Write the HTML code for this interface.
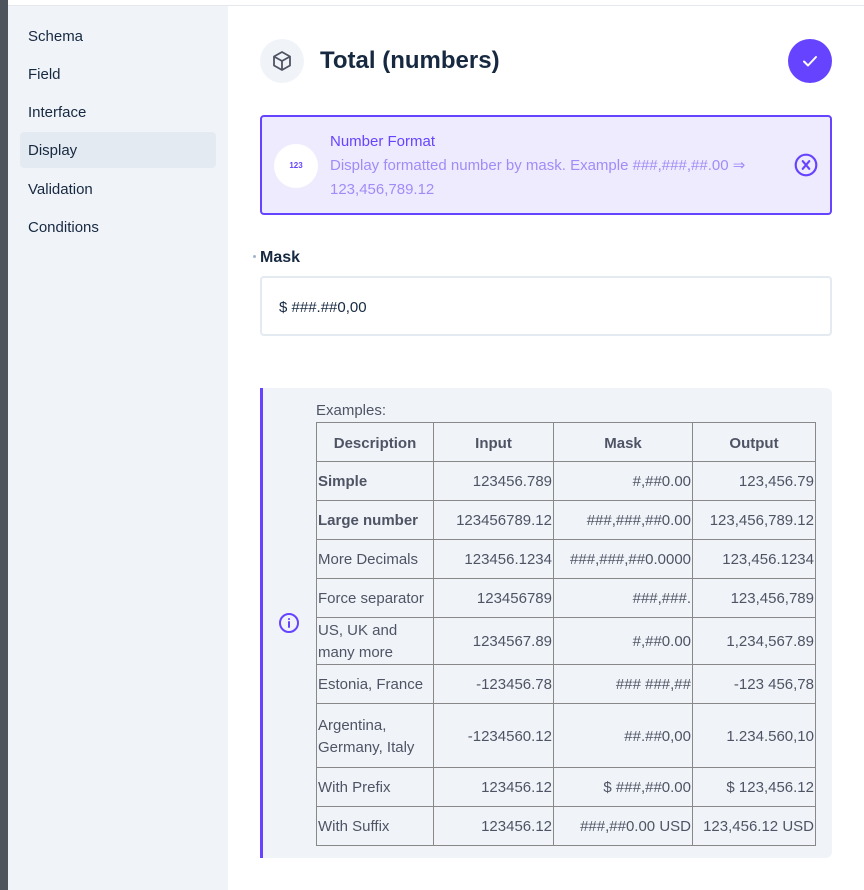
<!DOCTYPE html>
<html><head><meta charset="utf-8"><style>
*{box-sizing:border-box;margin:0;padding:0}
body{width:864px;height:890px;overflow:hidden;font-family:"Liberation Sans",sans-serif;background:#fff;position:relative;color:#172940}
#strip{position:absolute;left:0;top:0;width:8px;height:890px;background:#4f555c}
#side{position:absolute;left:8px;top:6px;width:220px;height:884px;background:#f0f4f9}
#top{position:absolute;left:8px;top:0;width:856px;height:6px;background:#fff;border-bottom:1px solid #e4e7eb}
.nav{position:absolute;left:12px;width:196px;height:36px;line-height:36px;padding-left:8px;font-size:15px;color:#172940;border-radius:4px}
.nav.a{background:#e4eaf1}
#hicon{position:absolute;left:260px;top:39px;width:44px;height:44px;border-radius:50%;background:#f0f4f9}
#title{position:absolute;left:320px;top:47px;font-size:24px;font-weight:bold;color:#172940}
#check{position:absolute;left:788px;top:39px;width:44px;height:44px;border-radius:50%;background:#6644ff}
#card{position:absolute;left:260px;top:115px;width:572px;height:100px;border:2px solid #6644ff;border-radius:4px;background:#efebfe}
#c123{position:absolute;left:12px;top:27px;width:44px;height:44px;border-radius:50%;background:#fff;color:#6644ff;font-size:8px;font-weight:bold;text-align:center;line-height:44px}
#ct{position:absolute;left:68px;top:16px;font-size:15px;color:#6644ff}
#cd{position:absolute;left:68px;top:37px;width:460px;font-size:15px;line-height:24px;color:#a18cf7}
#mask{position:absolute;left:260px;top:249px;font-size:16px;font-weight:bold}
#dot{position:absolute;left:253px;top:255px;width:3px;height:3px;border-radius:50%;background:#a2b5cd}
#inp{position:absolute;left:260px;top:276px;width:572px;height:60px;border:2px solid #e4eaf1;border-radius:4px;padding:0 17px;line-height:59px;font-size:15px;color:#172940}
#info{position:absolute;left:260px;top:388px;width:572px;height:470px;background:#f0f4f9;border-left:3px solid #6644ff;border-radius:0 6px 6px 0}
#ex{position:absolute;left:316px;top:402px;font-size:15px;color:#4f5464}
table{position:absolute;left:316px;top:422px;border-collapse:collapse;font-size:15px;color:#4f5464}
td,th{border:1px solid #888;padding:2px 1px 0 1px}
th{height:39px;text-align:center}
td{text-align:right;line-height:22px}
td:first-child{text-align:left}
</style></head><body>
<div id="strip"></div><div id="top"></div>
<div id="side">
<div class="nav" style="top:13px">Schema</div>
<div class="nav" style="top:51px">Field</div>
<div class="nav" style="top:89px">Interface</div>
<div class="nav a" style="top:126px;line-height:38px">Display</div>
<div class="nav" style="top:166px">Validation</div>
<div class="nav" style="top:204px">Conditions</div>
</div>
<div id="hicon"><svg width="44" height="44" viewBox="0 0 44 44" fill="none" stroke="#4f5464" stroke-width="1.8" stroke-linejoin="round"><path d="M22 13l8 4.5v9L22 31l-8-4.5v-9z M14 17.5l8 4.5 8-4.5 M22 22v9"/></svg></div>
<div id="title">Total (numbers)</div>
<div id="check"><svg width="44" height="44" viewBox="0 0 44 44" fill="none" stroke="#fff" stroke-width="2" stroke-linecap="round" stroke-linejoin="round"><path d="M16 22.5l4 4 8-8.5"/></svg></div>
<div id="card"><div id="c123">123</div><div id="ct">Number Format</div>
<div id="cd">Display formatted number by mask. Example ###,###,##.00 ⇒ 123,456,789.12</div>
<svg style="position:absolute;left:531px;top:35px" width="26" height="26" viewBox="0 0 24 24" fill="none" stroke="#6644ff" stroke-width="2" stroke-linecap="round"><circle cx="12" cy="12" r="9.5"/><path d="M9 8.5l6 7M15 8.5l-6 7"/></svg></div>
<div id="dot"></div><div id="mask">Mask</div>
<div id="inp">$ ###.##0,00</div>
<div id="info"><svg style="position:absolute;left:14px;top:223px" width="24" height="24" viewBox="0 0 24 24" fill="none" stroke="#6644ff" stroke-width="2" stroke-linecap="round"><circle cx="12" cy="12" r="9"/><path d="M12 11v5M12 8v.1"/></svg></div>
<div id="ex">Examples:</div>
<table>
<tr><th style="width:117px">Description</th><th style="width:120px">Input</th><th style="width:139px">Mask</th><th style="width:123px">Output</th></tr>
<tr style="height:39px"><td><b>Simple</b></td><td>123456.789</td><td>#,##0.00</td><td>123,456.79</td></tr>
<tr style="height:39px"><td><b>Large number</b></td><td>123456789.12</td><td>###,###,##0.00</td><td>123,456,789.12</td></tr>
<tr style="height:39px"><td>More Decimals</td><td>123456.1234</td><td>###,###,##0.0000</td><td>123,456.1234</td></tr>
<tr style="height:39px"><td>Force separator</td><td>123456789</td><td>###,###.</td><td>123,456,789</td></tr>
<tr style="height:47px"><td>US, UK and<br>many more</td><td>1234567.89</td><td>#,##0.00</td><td>1,234,567.89</td></tr>
<tr style="height:39px"><td>Estonia, France</td><td>-123456.78</td><td>### ###,##</td><td>-123 456,78</td></tr>
<tr style="height:64px"><td>Argentina,<br>Germany, Italy</td><td>-1234560.12</td><td>##.##0,00</td><td>1.234.560,10</td></tr>
<tr style="height:39px"><td>With Prefix</td><td>123456.12</td><td>$ ###,##0.00</td><td>$ 123,456.12</td></tr>
<tr style="height:39px"><td>With Suffix</td><td>123456.12</td><td>###,##0.00 USD</td><td>123,456.12 USD</td></tr>
</table>
</body></html>
